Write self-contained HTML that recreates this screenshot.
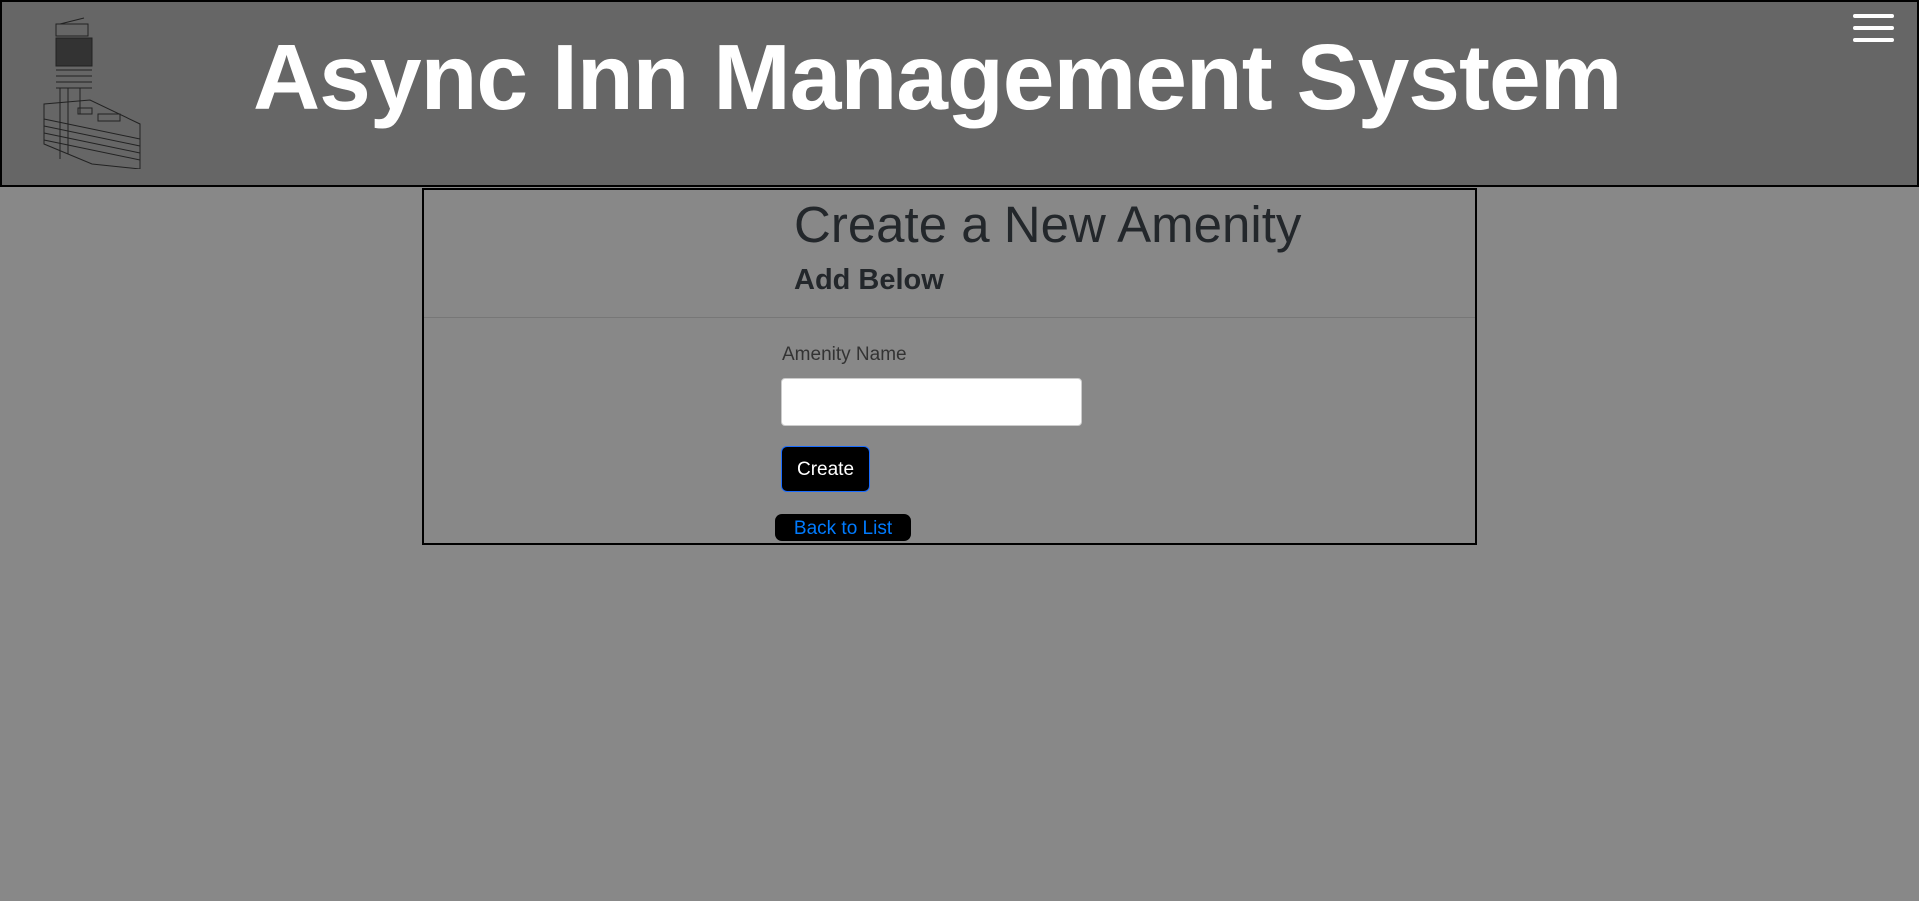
<!DOCTYPE html>
<html><head><style>
body{margin:0;background:#888;font-family:"Liberation Sans",sans-serif;width:1919px;height:901px;overflow:hidden;position:relative}
.hdr{position:absolute;left:0;top:0;width:1915px;height:183px;background:#666;border:2px solid #000}
.title{position:absolute;left:251px;top:22px;font-size:93px;font-weight:bold;color:#fff;white-space:nowrap;letter-spacing:-1px}
.burger{position:absolute;left:1851px;width:41px;height:4px;background:#fff;border-radius:2px}
.card{position:absolute;left:422px;top:188px;width:1051px;height:353px;border:2px solid #000}
.hr{position:absolute;left:424px;top:317px;width:1051px;height:1px;background:#777}
.t{position:absolute;color:#23272b;white-space:nowrap}
</style></head><body>
<div class="hdr">
<svg style="position:absolute;left:38px;top:12px" width="110" height="155" viewBox="0 0 110 155" fill="none" stroke="#222" stroke-width="1">
<rect x="16" y="10" width="32" height="12"/><line x1="20" y1="10" x2="44" y2="4"/>
<rect x="16" y="24" width="36" height="28" fill="#333"/>
<line x1="16" y1="56" x2="52" y2="56"/><line x1="16" y1="62" x2="52" y2="62"/><line x1="16" y1="68" x2="52" y2="68"/><line x1="16" y1="74" x2="52" y2="74"/>
<line x1="20" y1="74" x2="20" y2="145"/><line x1="28" y1="74" x2="28" y2="140"/><line x1="40" y1="74" x2="40" y2="100"/>
<path d="M4 90 L50 86 L100 110 L100 155 L52 150 L4 130 Z"/>
<line x1="4" y1="105" x2="100" y2="125"/><line x1="4" y1="112" x2="100" y2="132"/><line x1="4" y1="119" x2="100" y2="139"/><line x1="4" y1="126" x2="100" y2="146"/>
<rect x="38" y="94" width="14" height="6"/><rect x="58" y="100" width="22" height="7"/>
</svg>
<div class="title">Async Inn Management System</div>
<div class="burger" style="top:12px"></div><div class="burger" style="top:24px"></div><div class="burger" style="top:36px"></div>
</div>
<div class="card"></div>
<div class="hr"></div>
<div class="t" style="left:794px;top:195px;font-size:51px">Create a New Amenity</div>
<div class="t" style="left:794px;top:264px;font-size:29px;font-weight:bold">Add Below</div>
<div class="t" style="left:782px;top:344px;font-size:19px;color:#333">Amenity Name</div>
<div style="position:absolute;left:781px;top:378px;width:299px;height:46px;background:#fff;border:1px solid #ccc;border-radius:4px"></div>
<div style="position:absolute;left:781px;top:446px;width:87px;height:44px;background:#000;border:1px solid #1a6cff;border-radius:6px;color:#fff;font-size:19px;line-height:46px;text-align:center">Create</div>
<div style="position:absolute;left:775px;top:514px;width:136px;height:27px;background:#000;border-radius:7px;color:#007bff;font-size:19px;line-height:30px;text-align:center">Back to List</div>
</body></html>
